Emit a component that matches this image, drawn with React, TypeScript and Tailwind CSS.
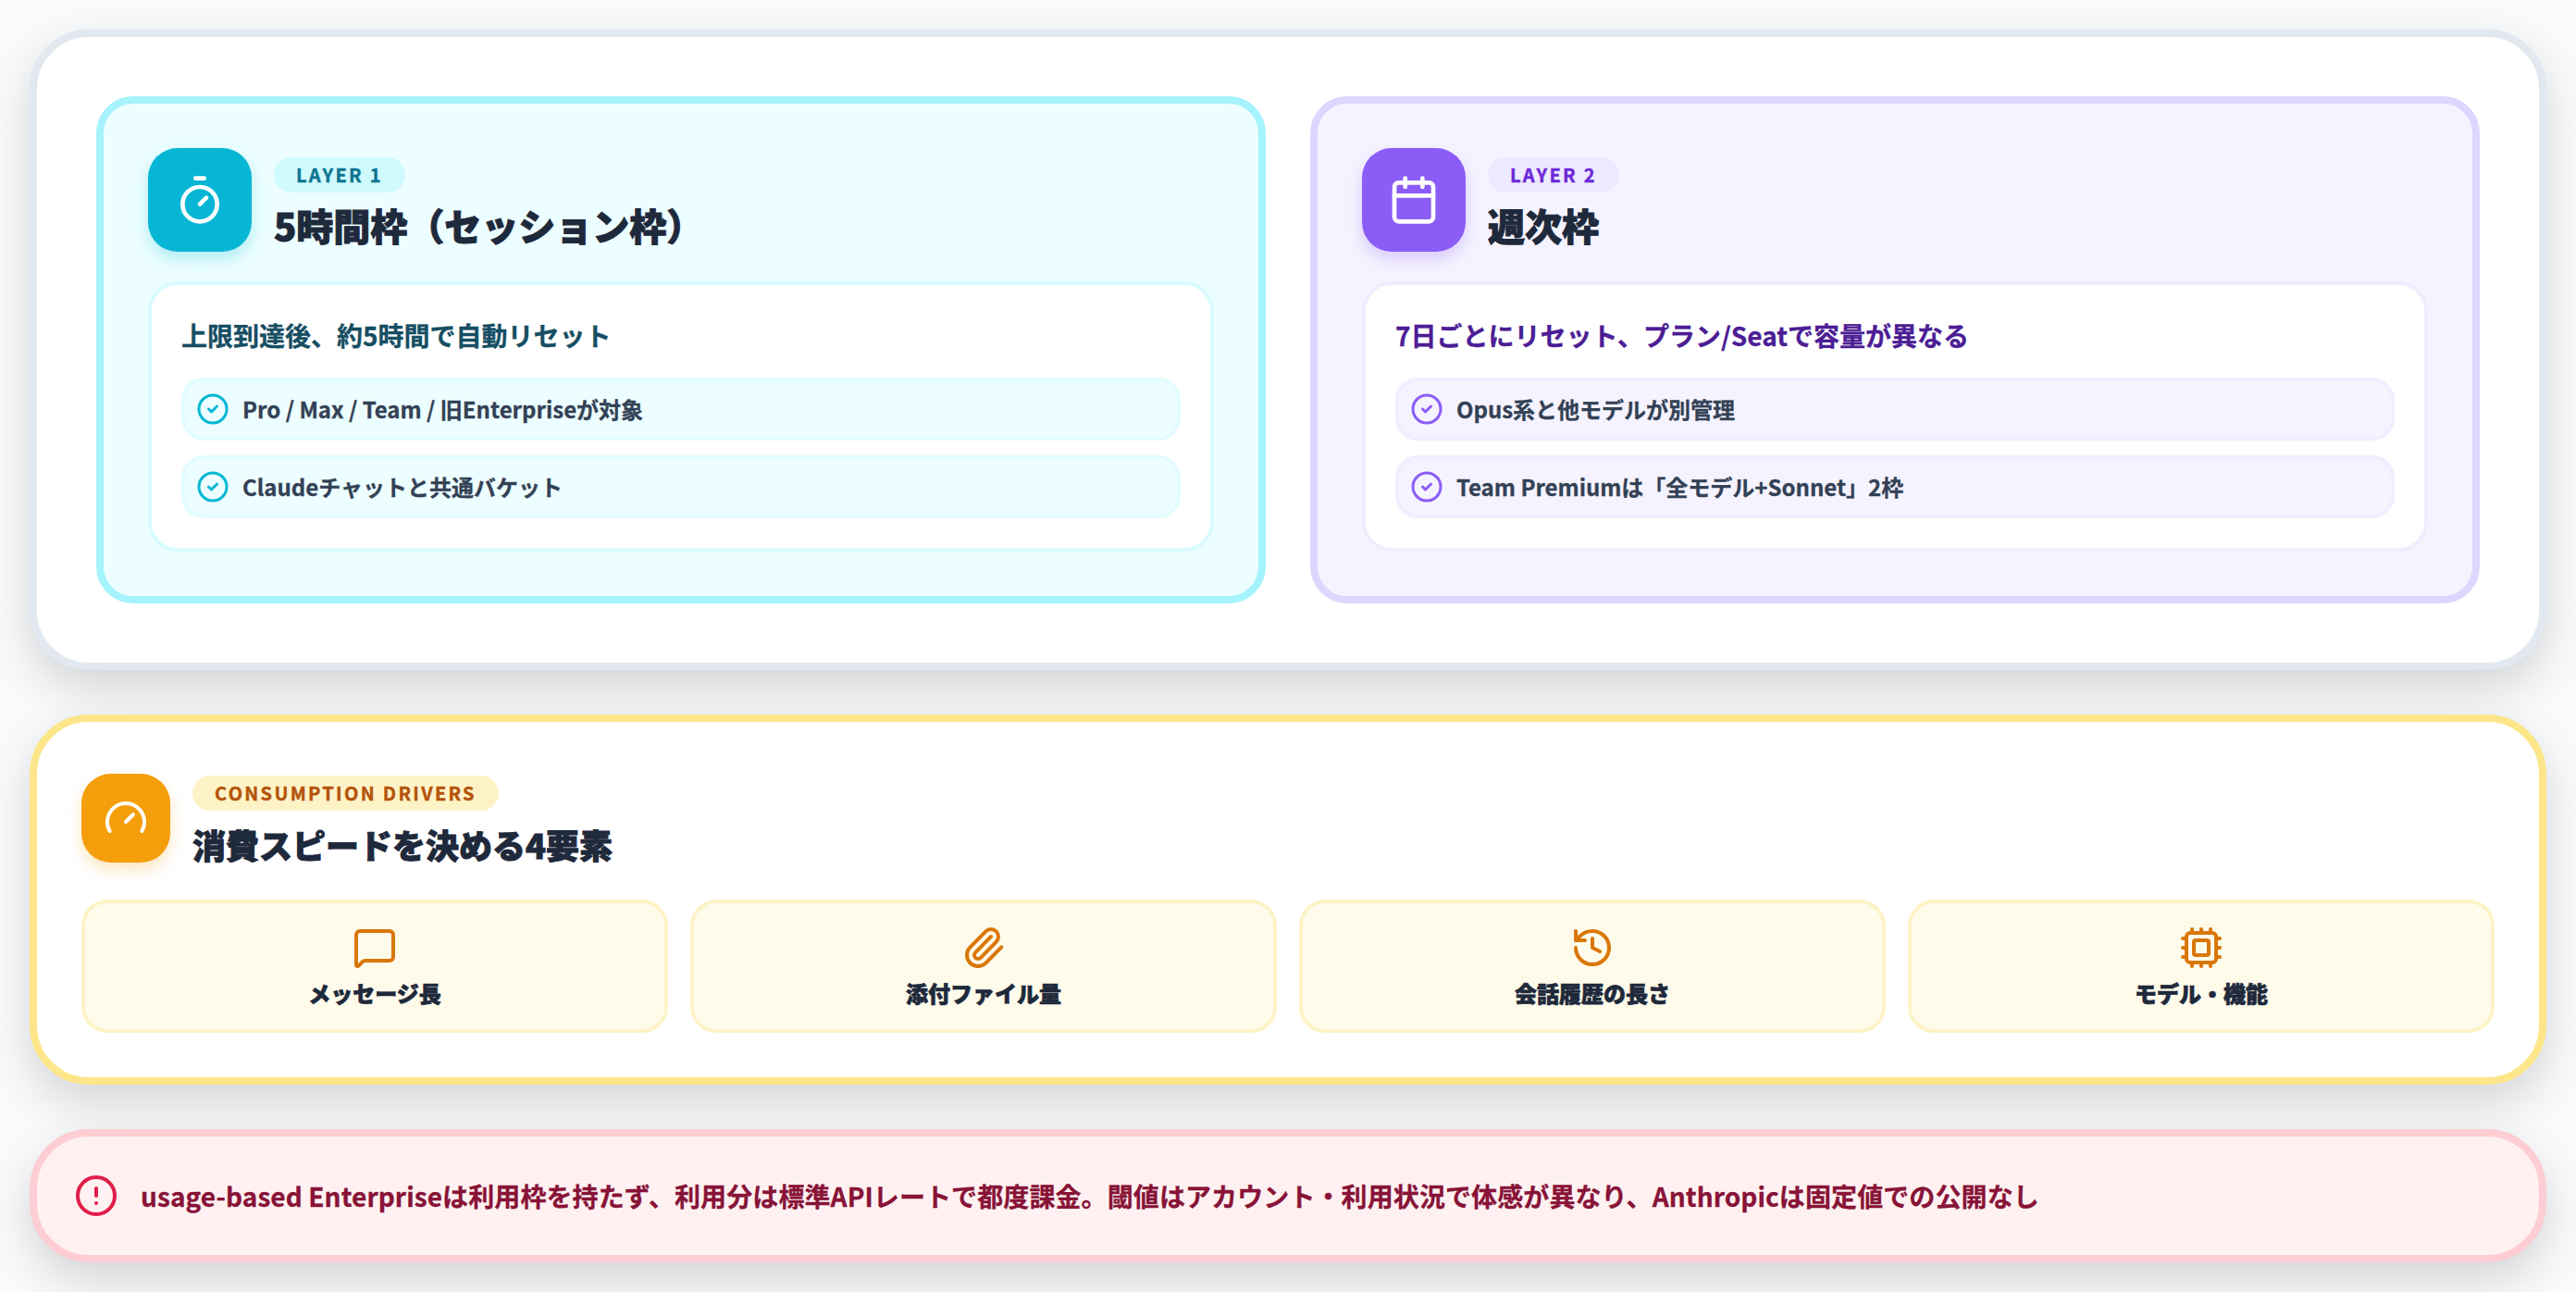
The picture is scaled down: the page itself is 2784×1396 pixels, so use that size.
import { CircleAlert, CircleCheck, Calendar, Cpu, Gauge, History, MessageSquare, Paperclip, Timer } from 'lucide-react'

const layers = [
  {
    badge: 'LAYER 1',
    title: '5時間枠（セッション枠）',
    lead: '上限到達後、約5時間で自動リセット',
    items: ['Pro / Max / Team / 旧Enterpriseが対象', 'Claudeチャットと共通バケット'],
    Icon: Timer,
    panel: 'border-[#a5f3fc] bg-[#ecfeff]',
    iconBox: 'bg-[#06b6d4] shadow-[0_8px_16px_rgba(6,182,212,0.25)]',
    badgeTone: 'bg-[#cffafe] text-[#0e7490]',
    box: 'border-[#d9fbff]',
    leadTone: 'text-[#164e63]',
    row: 'border-[#e2fcff] bg-[#ecfeff]',
    check: 'text-[#06b6d4]',
  },
  {
    badge: 'LAYER 2',
    title: '週次枠',
    lead: '7日ごとにリセット、プラン/Seatで容量が異なる',
    items: ['Opus系と他モデルが別管理', 'Team Premiumは「全モデル+Sonnet」2枠'],
    Icon: Calendar,
    panel: 'border-[#ddd6fe] bg-[#f5f3ff]',
    iconBox: 'bg-[#8b5cf6] shadow-[0_8px_16px_rgba(139,92,246,0.25)]',
    badgeTone: 'bg-[#ede9fe] text-[#6d28d9]',
    box: 'border-[#f0edfe]',
    leadTone: 'text-[#4c1d95]',
    row: 'border-[#f1eeff] bg-[#f5f3ff]',
    check: 'text-[#8b5cf6]',
  },
]

const drivers = [
  { label: 'メッセージ長', Icon: MessageSquare },
  { label: '添付ファイル量', Icon: Paperclip },
  { label: '会話履歴の長さ', Icon: History },
  { label: 'モデル・機能', Icon: Cpu },
]

export default function App() {
  return (
    <div className="flex min-h-screen flex-col gap-[48px] bg-[#f8fafc] p-[32px] font-['Noto_Sans_CJK_JP','Noto_Sans',sans-serif]">
      <section className="grid grid-cols-2 gap-[48px] rounded-[64px] border-[8px] border-[#e2e8f0] bg-white p-[64px] shadow-[0_20px_50px_rgba(0,0,0,0.15)]">
        {layers.map((layer) => (
          <div key={layer.badge} className={`rounded-[40px] border-[8px] p-[48px] ${layer.panel}`}>
            <div className="mb-[32px] flex items-center gap-[24px]">
              <div className={`flex h-[112px] w-[112px] shrink-0 items-center justify-center rounded-[32px] ${layer.iconBox}`}>
                <layer.Icon size={56} className="text-white" />
              </div>
              <div className="flex h-[112px] flex-col items-start pt-[10px]">
                <span className={`mb-[15px] rounded-full px-[24px] py-[3px] text-[20px] leading-[32px] font-bold tracking-[0.115em] [-webkit-text-stroke:0.4px_currentColor] ${layer.badgeTone}`}>
                  {layer.badge}
                </span>
                <h2 className="text-[40px] leading-[40px] font-black text-[#1e293b] [-webkit-text-stroke:1px_currentColor]">{layer.title}</h2>
              </div>
            </div>
            <div className={`rounded-[32px] border-[4px] bg-white p-[32px] ${layer.box}`}>
              <p className={`mb-[24px] text-[28px] leading-[44px] font-bold [-webkit-text-stroke:0.3px_currentColor] ${layer.leadTone}`}>{layer.lead}</p>
              <ul className="flex flex-col gap-[16px]">
                {layer.items.map((item) => (
                  <li key={item} className={`flex items-center gap-[14px] rounded-[24px] border-[4px] px-[12px] py-[9px] text-[24px] leading-[42px] font-bold text-[#334155] [-webkit-text-stroke:0.3px_currentColor] ${layer.row}`}>
                    <CircleCheck size={36} className={`shrink-0 ${layer.check}`} />
                    {item}
                  </li>
                ))}
              </ul>
            </div>
          </div>
        ))}
      </section>

      <section className="rounded-[64px] border-[8px] border-[#fde68a] bg-white p-[48px] shadow-[0_20px_50px_rgba(0,0,0,0.15)]">
        <div className="mb-[32px] flex items-center gap-[24px]">
          <div className="flex h-[96px] w-[96px] shrink-0 items-center justify-center rounded-[32px] bg-[#f59e0b] shadow-[0_8px_16px_rgba(245,158,11,0.25)]">
            <Gauge size={48} className="text-white" />
          </div>
          <div className="flex h-[112px] flex-col items-start pt-[10px]">
            <span className="mb-[16px] rounded-full bg-[#fef3c7] px-[24px] py-[3px] text-[20px] leading-[32px] font-bold tracking-[0.115em] text-[#b45309] [-webkit-text-stroke:0.4px_currentColor]">
              CONSUMPTION DRIVERS
            </span>
            <h2 className="text-[36px] leading-[40px] font-black text-[#1e293b] [-webkit-text-stroke:1px_currentColor]">消費スピードを決める4要素</h2>
          </div>
        </div>
        <div className="grid grid-cols-4 gap-[24px]">
          {drivers.map((driver) => (
            <div key={driver.label} className="flex flex-col items-center rounded-[28px] border-[4px] border-[#fef3c7] bg-[#fffbeb] pt-[24px] pb-[22px]">
              <driver.Icon size={48} className="mb-[8px] text-[#d97706]" />
              <span className="text-[24px] leading-[34px] font-black text-[#1e293b] [-webkit-text-stroke:0.7px_currentColor]">{driver.label}</span>
            </div>
          ))}
        </div>
      </section>

      <section className="flex h-[144px] items-center gap-[24px] rounded-[64px] border-[8px] border-[#fecdd3] bg-[#fff1f2] px-[40px] shadow-[0_20px_50px_rgba(0,0,0,0.15)]">
        <CircleAlert size={48} className="shrink-0 text-[#e11d48]" />
        <p className="text-[28px] leading-[48px] font-bold tracking-[0.1px] text-[#881337] [-webkit-text-stroke:0.3px_currentColor]">
          usage-based Enterpriseは利用枠を持たず、利用分は標準APIレートで都度課金。閾値はアカウント・利用状況で体感が異なり、Anthropicは固定値での公開なし
        </p>
      </section>
    </div>
  )
}
